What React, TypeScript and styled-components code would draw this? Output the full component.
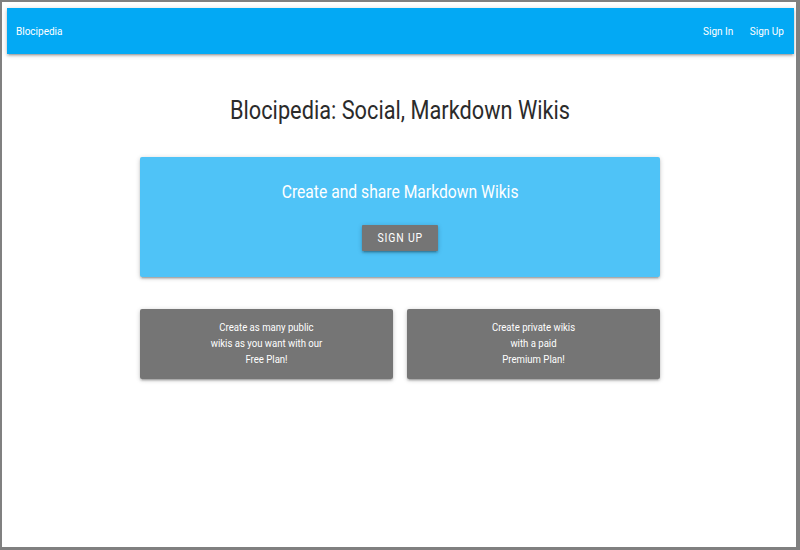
import React from 'react';
import styled, { createGlobalStyle } from 'styled-components';

// the reference text is a little narrower than Roboto renders here
const SQUEEZE = 'scaleX(0.87)';

const GlobalStyle = createGlobalStyle`
  html, body {
    margin: 0;
    padding: 0;
    background: #ffffff;
  }
  body {
    font-family: Roboto, "Noto Sans", sans-serif;
  }
`;

const shadow =
  '0 2px 2px 0 rgba(0, 0, 0, 0.14), 0 3px 1px -2px rgba(0, 0, 0, 0.12), 0 1px 5px 0 rgba(0, 0, 0, 0.2)';

const Frame = styled.div`
  box-sizing: border-box;
  width: 800px;
  height: 550px;
  border-style: solid;
  border-color: #808080;
  border-width: 2px 4px 3px 2px;
  background: #ffffff;
  overflow: hidden;
`;

const Nav = styled.nav`
  margin: 6px 2px 0 5px;
  height: 46px;
  background: #03a9f4;
  display: flex;
  align-items: center;
  justify-content: space-between;
  padding: 0 10px 0 9px;
  box-shadow: ${shadow};
`;

const Brand = styled.a`
  display: inline-block;
  color: #ffffff;
  font-size: 11.5px;
  text-decoration: none;
  transform: ${SQUEEZE};
  transform-origin: left center;
`;

const NavLinks = styled.div`
  display: flex;
  gap: 19px;
  transform: ${SQUEEZE};
  transform-origin: right center;
`;

const NavLink = styled.a`
  color: #ffffff;
  font-size: 11.5px;
  text-decoration: none;
`;

const Main = styled.main`
  width: 520px;
  margin-left: 138px;
  display: flex;
  flex-direction: column;
  align-items: stretch;
`;

const Title = styled.h1`
  margin: 41px 0 0;
  text-align: center;
  font-size: 25px;
  font-weight: 400;
  line-height: 32px;
  color: #2b2b2b;
  white-space: nowrap;
  transform: ${SQUEEZE};
`;

const Hero = styled.section`
  margin-top: 30px;
  height: 120px;
  box-sizing: border-box;
  background: #4fc3f7;
  border-radius: 2px;
  box-shadow: ${shadow};
  display: flex;
  flex-direction: column;
  align-items: center;
  padding-top: 23px;
`;

const HeroText = styled.h2`
  margin: 0;
  font-size: 18px;
  font-weight: 400;
  line-height: 24px;
  color: #ffffff;
  white-space: nowrap;
  transform: ${SQUEEZE};
`;

const Button = styled.button`
  margin-top: 21px;
  width: 76px;
  height: 26px;
  padding: 0;
  border: none;
  border-radius: 1px;
  background: #757575;
  color: #ffffff;
  font-family: Roboto, sans-serif;
  font-size: 12px;
  font-weight: 400;
  box-shadow: ${shadow};
  cursor: pointer;
`;

const ButtonLabel = styled.span`
  display: inline-block;
  letter-spacing: 1px;
  text-transform: uppercase;
  white-space: nowrap;
  transform: ${SQUEEZE};
`;

const Plans = styled.div`
  margin-top: 32px;
  display: grid;
  grid-template-columns: 1fr 1fr;
  gap: 14px;
`;

const PlanCard = styled.div`
  height: 70px;
  box-sizing: border-box;
  background: #757575;
  border-radius: 2px;
  box-shadow: ${shadow};
  padding-top: 11px;
`;

const PlanText = styled.div`
  color: #ffffff;
  font-size: 11px;
  line-height: 16px;
  text-align: center;
  white-space: nowrap;
  transform: ${SQUEEZE};
`;

const plans: string[][] = [
  ['Create as many public', 'wikis as you want with our', 'Free Plan!'],
  ['Create private wikis', 'with a paid', 'Premium Plan!'],
];

const App: React.FC = () => {
  return (
    <Frame>
      <GlobalStyle />
      <Nav>
        <Brand href="#">Blocipedia</Brand>
        <NavLinks>
          <NavLink href="#">Sign In</NavLink>
          <NavLink href="#">Sign Up</NavLink>
        </NavLinks>
      </Nav>
      <Main>
        <Title>Blocipedia: Social, Markdown Wikis</Title>
        <Hero>
          <HeroText>Create and share Markdown Wikis</HeroText>
          <Button>
            <ButtonLabel>Sign Up</ButtonLabel>
          </Button>
        </Hero>
        <Plans>
          {plans.map((lines, i) => (
            <PlanCard key={i}>
              <PlanText>
                {lines.map((line, j) => (
                  <div key={j}>{line}</div>
                ))}
              </PlanText>
            </PlanCard>
          ))}
        </Plans>
      </Main>
    </Frame>
  );
};

export default App;
